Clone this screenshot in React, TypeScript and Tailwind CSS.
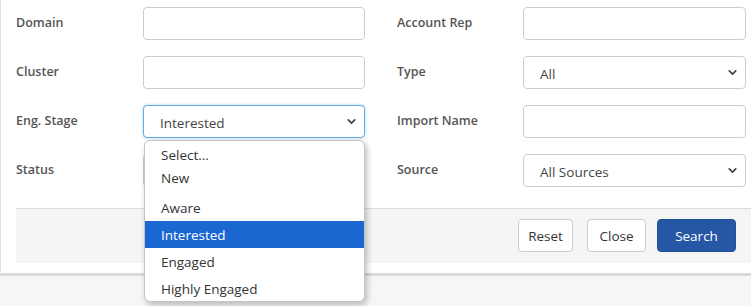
import { ChevronDown } from 'lucide-react';

interface FieldProps {
  label: string;
  kind: 'input' | 'select';
  value?: string;
  focused?: boolean;
  right?: boolean;
}

const Field = ({ label, kind, value, focused, right }: FieldProps) => (
  <>
    <label className={`flex h-[33px] items-center text-[12.5px] font-semibold text-[#555] ${right ? 'pl-8' : ''}`}>
      {label}
    </label>
    <div
      className={`flex h-[33px] items-center justify-between rounded-[4px] border bg-white pl-4 pr-[6px] text-[13.5px] text-[#444] ${
        focused ? 'border-[#66afe9] shadow-[0_0_3px_rgba(102,175,233,0.6)]' : 'border-[#ccc]'
      }`}
    >
      <span className="pt-[3px]">{value}</span>
      {kind === 'select' && <ChevronDown size={13} strokeWidth={3.2} className="text-[#444]" />}
    </div>
  </>
);

const stageOptions = ['Aware', 'Interested', 'Engaged', 'Highly Engaged'];

export default function App() {
  return (
    <div className="relative h-[306px] w-[751px] overflow-hidden bg-[#f6f6f6]" style={{ fontFamily: '"Open Sans", "Noto Sans", sans-serif' }}>
      <div className="h-[276px] border-b-[3px] border-l border-b-[#dadada] border-l-[#e2e2e2] bg-white pl-[15px] pt-[7px]">
        <div className="grid grid-cols-[127px_222px_158px_223px] gap-y-4">
          <Field label="Domain" kind="input" />
          <Field label="Account Rep" kind="input" right />
          <Field label="Cluster" kind="input" />
          <Field label="Type" kind="select" value="All" right />
          <Field label="Eng. Stage" kind="select" value="Interested" focused />
          <Field label="Import Name" kind="input" right />
          <Field label="Status" kind="select" />
          <Field label="Source" kind="select" value="All Sources" right />
        </div>

        <div className="mt-[21px] flex h-[55px] items-start justify-end border-t border-[#dcdcdc] bg-[#f5f5f5] pr-[15px] pt-[10px]">
          <button className="h-[33px] w-[55px] rounded-[4px] border border-[#ccc] bg-white pt-[2px] text-[13.5px] text-[#333]">Reset</button>
          <button className="ml-[14px] h-[33px] w-[59px] rounded-[4px] border border-[#ccc] bg-white pt-[2px] text-[13.5px] text-[#333]">Close</button>
          <button className="ml-[11px] h-[33px] w-[79px] rounded-[4px] border border-[#23509a] bg-[#2657a5] pt-[2px] text-[13.5px] text-white">Search</button>
        </div>
      </div>

      <div className="absolute left-[144px] top-[140px] h-[162px] w-[221px] overflow-hidden rounded-[6px] border border-[#c4c4c4] bg-white text-[13.5px] leading-none text-[#333] shadow-[2px_3px_6px_rgba(0,0,0,0.25)]">
        <div className="mt-[2px] flex h-[23px] items-center pl-4 pt-[2px]">Select...</div>
        <div className="flex h-[23px] items-center pl-4 pt-[2px]">New</div>
        <div className="h-[5px]" />
        {stageOptions.map((opt) => (
          <div
            key={opt}
            className={`flex h-[27px] items-center pl-4 pt-[2px] ${opt === 'Interested' ? 'bg-[#1a67d2] text-white' : ''}`}
          >
            {opt}
          </div>
        ))}
      </div>
    </div>
  );
}
